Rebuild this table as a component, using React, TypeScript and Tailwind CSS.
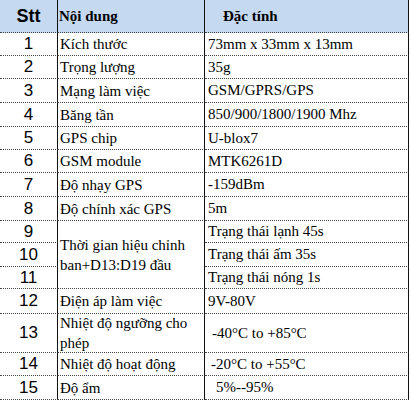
import React from 'react';

const sans = "font-['Liberation_Sans',Arial,sans-serif]";
const serif = "font-['Liberation_Serif','Times_New_Roman',serif]";

// every cell: solid black right edge, dotted bottom edge
const cell =
  "border-r border-b border-[#111] [border-bottom-style:dotted] [border-bottom-color:#444] flex items-center";
const sttCell = `${cell} ${sans} justify-center text-[17px] text-black`;
const nameCell = `${cell} ${serif} pl-[2px] text-[15px] leading-[20px] text-black`;
const specCell = `${cell} ${serif} pl-[3px] text-[15px] text-black`;

type Row = { n: string; name?: React.ReactNode; spec: string; specPad?: string };

const top: Row[] = [
  { n: '1', name: 'Kích thước', spec: '73mm x 33mm x 13mm' },
  { n: '2', name: 'Trọng lượng', spec: '35g' },
  { n: '3', name: 'Mạng làm việc', spec: 'GSM/GPRS/GPS' },
  { n: '4', name: 'Băng tần', spec: '850/900/1800/1900 Mhz' },
  { n: '5', name: 'GPS chip', spec: 'U-blox7' },
  { n: '6', name: 'GSM module', spec: 'MTK6261D' },
  { n: '7', name: 'Độ nhạy GPS', spec: '-159dBm' },
  { n: '8', name: 'Độ chính xác GPS', spec: '5m' },
];

const bottom: Row[] = [
  { n: '12', name: 'Điện áp làm việc', spec: '9V-80V' },
  {
    n: '13',
    name: (
      <>
        Nhiệt độ ngưỡng cho
        <br />
        phép
      </>
    ),
    spec: '-40°C to +85°C',
    specPad: 'pl-[7px]',
  },
  { n: '14', name: 'Nhiệt độ hoạt động', spec: '-20°C to +55°C', specPad: 'pl-[6px]' },
  { n: '15', name: 'Độ ẩm', spec: '5%--95%', specPad: 'pl-[11px]' },
];

const SpecTable = () => (
  <div className="grid w-[409px] grid-cols-[58px_147px_204px] grid-rows-[33px_23px_23px_24px_24px_23px_23px_24px_24px_22px_24px_22px_25px_39px_23px_24px]">
    {/* header */}
    <div className={`${cell} ${sans} justify-center bg-[#c5d9f1] text-[18px] font-bold text-black`}>Stt</div>
    <div className={`${cell} ${serif} bg-[#c5d9f1] pl-[1px] text-[15px] font-bold text-black`}>Nội dung</div>
    <div className={`${cell} ${serif} bg-[#c5d9f1] pl-[18px] text-[15px] font-bold text-black`}>Đặc tính</div>

    {top.map((r) => (
      <React.Fragment key={r.n}>
        <div className={sttCell}>{r.n}</div>
        <div className={nameCell}>{r.name}</div>
        <div className={specCell}>{r.spec}</div>
      </React.Fragment>
    ))}

    {/* rows 9-11 share one description cell */}
    <div className={`${sttCell} col-start-1 row-start-10`}>9</div>
    <div className={`${nameCell} col-start-2 row-start-10 row-span-3 leading-[18px]`}>
      <span>
        Thời gian hiệu chỉnh
        <br />
        ban+D13:D19 đầu
      </span>
    </div>
    <div className={`${specCell} col-start-3 row-start-10`}>Trạng thái lạnh 45s</div>
    <div className={`${sttCell} col-start-1 row-start-11`}>10</div>
    <div className={`${specCell} col-start-3 row-start-11`}>Trạng thái ấm 35s</div>
    <div className={`${sttCell} col-start-1 row-start-12`}>11</div>
    <div className={`${specCell} col-start-3 row-start-12`}>Trạng thái nóng 1s</div>

    {bottom.map((r) => (
      <React.Fragment key={r.n}>
        <div className={sttCell}>{r.n}</div>
        <div className={nameCell}>
          <span>{r.name}</span>
        </div>
        <div className={`${specCell} ${r.specPad ?? ''}`}>{r.spec}</div>
      </React.Fragment>
    ))}
  </div>
);

const App = () => {
  return (
    <div className="h-[400px] w-[410px] overflow-hidden bg-white">
      <SpecTable />
    </div>
  );
};

export default App;
